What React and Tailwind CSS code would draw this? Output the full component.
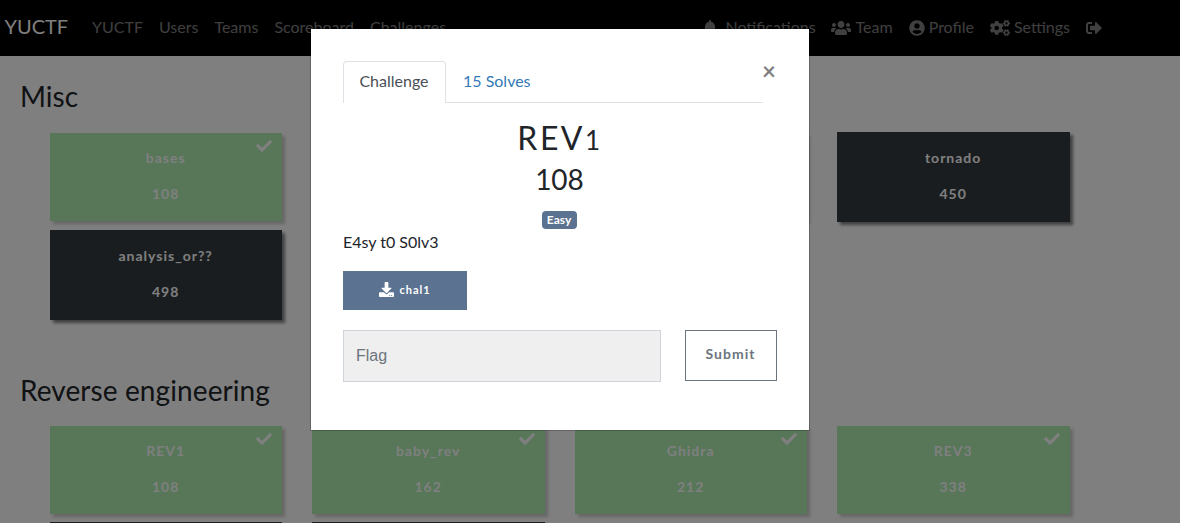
import React from 'react';
import { FaBell, FaUsers, FaUserCircle, FaCogs, FaSignOutAlt, FaCheck, FaDownload } from 'react-icons/fa';

function NavLink({ icon, children }) {
  return (
    <a className="flex items-center whitespace-nowrap px-2">
      {icon}
      {children && <span className="mb-0.5">{children}</span>}
    </a>
  );
}

function Navbar() {
  return (
    <nav className="flex h-14 items-center bg-black pb-px text-base text-white/50">
      <a className="mb-[3px] ml-[4.5px] mr-4 w-[63.5px] text-xl leading-none text-white">YUCTF</a>
      <div className="flex">
        <NavLink>YUCTF</NavLink>
        <NavLink>Users</NavLink>
        <NavLink>Teams</NavLink>
        <NavLink>Scoreboard</NavLink>
        <NavLink>Challenges</NavLink>
      </div>
      <div className="ml-auto mr-[70px] flex">
        <NavLink icon={<FaBell className="mr-[7px]" />}>Notifications</NavLink>
        <NavLink icon={<FaUsers className="-ml-px mr-[5px] h-4 w-5" />}>Team</NavLink>
        <NavLink icon={<FaUserCircle className="mr-1" />}>Profile</NavLink>
        <NavLink icon={<FaCogs className="mr-1 h-4 w-5" />}>Settings</NavLink>
        <NavLink icon={<FaSignOutAlt />} />
      </div>
    </nav>
  );
}

function ChallengeCard({ name, points, solved }) {
  return (
    <div className="h-[90px] px-[15px]">
      <button
        className={
          'relative block w-full pr-px text-center text-sm font-bold tracking-[1px] text-white shadow-[3px_3px_3px_gray] ' +
          (solved ? 'my-px h-[88px] bg-[#37d63e] pb-[3px] opacity-40' : 'h-[90px] bg-[#343a40] pb-[3px]')
        }
      >
        {solved && <FaCheck className="absolute right-[10px] top-[5px] h-4 w-4" />}
        {name && <p className="mb-4 leading-5">{name}</p>}
        {points && <p className="leading-5">{points}</p>}
      </button>
    </div>
  );
}

function Section({ title, cards, className, gridClassName }) {
  return (
    <section className={className}>
      <h3 className="pl-5 text-[28px] leading-[34px] text-[#212529]">{title}</h3>
      <div className={'ml-[34.9px] grid w-[1050px] grid-cols-4 ' + gridClassName}>
        {cards.map((c, i) => <ChallengeCard key={i} {...c} />)}
      </div>
    </section>
  );
}

const misc = [
  { name: 'bases', points: 108, solved: true },
  { solved: true },
  { solved: true },
  { name: 'tornado', points: 450 },
  { name: 'analysis_or??', points: 498 },
];

const reverse = [
  { name: 'REV1', points: 108, solved: true },
  { name: 'baby_rev', points: 162, solved: true },
  { name: 'Ghidra', points: 212, solved: true },
  { name: 'REV3', points: 338, solved: true },
  {},
  {},
];

function Modal() {
  return (
    <div className="absolute left-[310px] top-7 h-[403px] w-[500px] border border-black/20 bg-white bg-clip-padding px-8 pt-8 text-[#212529]">
      <button className="absolute right-[33px] top-[30px] text-2xl font-bold leading-6 text-black/50">×</button>
      <div className="flex h-[42px] w-[420px] border-b border-[#dee2e6] text-base">
        <a className="h-[42px] w-[103px] rounded-t border border-b-0 border-[#dee2e6] bg-white pr-px pt-[7px] text-center text-[#495057]">Challenge</a>
        <a className="pl-[17px] pt-2 text-[#337ab7]">15 Solves</a>
      </div>
      <h2 className="mt-4 text-center text-[32px] leading-[38px] tracking-[2.5px]">
        REV<span className="text-[26px]">1</span>
      </h2>
      <h3 className="mt-[3px] pr-px text-center text-[28px] leading-[34px]">108</h3>
      <div className="mt-[15px] flex justify-center pr-[2px]">
        <span className="h-[18px] w-[35px] rounded bg-[#5b7290] text-center text-xs font-bold leading-[18px] text-white">Easy</span>
      </div>
      <p className="mt-px text-base leading-6">E4sy t0 S0lv3</p>
      <a className="mt-[17px] flex h-[39px] w-[124px] items-center justify-center bg-[#5b7290] text-[11px] font-bold tracking-[1px] text-white">
        <FaDownload className="mb-0.5 mr-[5px] h-[15px] w-[15px]" />chal1
      </a>
      <div className="mt-5 flex items-start justify-between">
        <input
          placeholder="Flag"
          className="h-[52px] w-[318px] border border-[#ced4da] bg-[#efefef] px-3 font-['Liberation_Sans'] text-base placeholder:text-[#6c757d]"
        />
        <button className="h-[51px] w-[92px] border border-[#6c757d] pb-[3px] pr-px text-sm font-bold tracking-[1px] text-[#6c757d]">Submit</button>
      </div>
    </div>
  );
}

export default function App() {
  return (
    <div className="relative h-[523px] overflow-hidden bg-white font-[Lato,sans-serif]">
      <Navbar />
      <Section title="Misc" cards={misc} className="pt-[23px]" gridClassName="mt-[19px] gap-y-2" />
      <Section title="Reverse engineering" cards={reverse} className="pt-[53px] tracking-[0.1px]" gridClassName="mt-[18px] gap-y-[7px]" />
      <div className="absolute inset-0 bg-black/50" />
      <Modal />
    </div>
  );
}
